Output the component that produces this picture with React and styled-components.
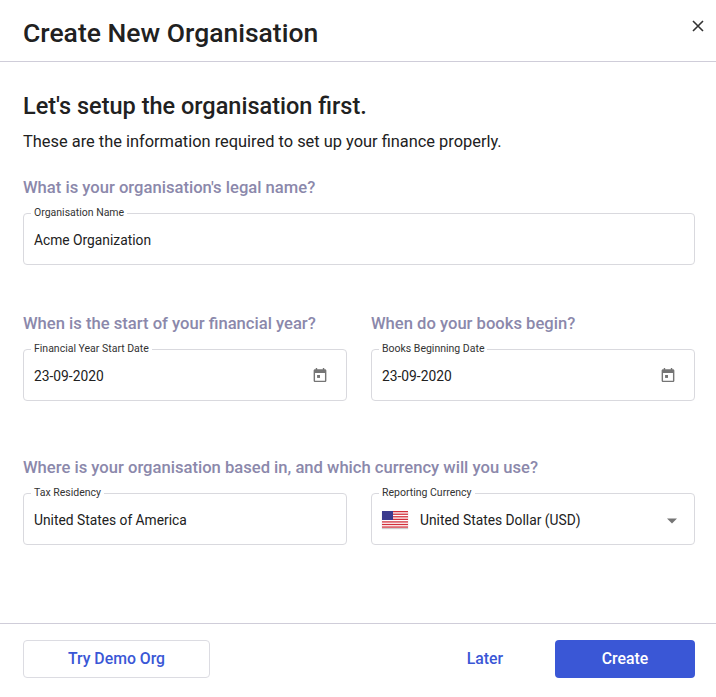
import React from "react";
import styled, { createGlobalStyle } from "styled-components";

const Global = createGlobalStyle`
  html, body { margin: 0; padding: 0; background: #fff; }
  body { font-family: Roboto, "Liberation Sans", sans-serif; color: #212121; }
`;

const Dialog = styled.div`
  width: 716px; height: 697px; display: flex; flex-direction: column; box-sizing: border-box;
`;
const Header = styled.div`
  height: 62px; box-sizing: border-box; border-bottom: 1px solid #cfcdd9;
  display: flex; align-items: center; justify-content: space-between; padding: 0 11px 0 23px;
`;
const Title = styled.h1`
  margin: 0; font-size: 26.5px; font-weight: 500; color: #212121; padding-top: 4px;
`;
const Close = styled.button`
  border: 0; background: none; padding: 0; margin-top: -10px; cursor: pointer; display: flex;
`;
const Body = styled.div`
  flex: 1; padding: 30px 21px 0 23px;
`;
const Heading = styled.h2`
  margin: 0; font-size: 23.5px; font-weight: 500; line-height: 28px;
`;
const Sub = styled.p`
  margin: 12px 0 0; font-size: 16.4px; line-height: 20px; color: #212121;
`;
const Question = styled.div`
  font-size: 16.6px; font-weight: 500; color: #8b88ab; line-height: 20px; margin-bottom: 14px;
`;
const Section = styled.div`
  margin-top: ${p => p.$mt}px;
`;
const Row = styled.div`
  display: grid; grid-template-columns: 1fr 1fr; column-gap: 24px;
`;
const Field = styled.fieldset`
  margin: 0; padding: 0 10px; height: 58px; box-sizing: border-box;
  border: 1px solid #d9d9de; border-radius: 4px; display: flex; align-items: center;
  gap: 10px; min-width: 0; position: relative; top: -5px;
`;
const Legend = styled.legend`
  font-size: 10.5px; color: #333; padding: 0 3px; margin-left: -3px; line-height: 12px;
`;
const Value = styled.span`
  flex: 1; font-size: 13.8px; color: #212121; margin-top: -4px;
`;
const IconWrap = styled.span`
  display: flex; margin-top: -6px; margin-right: 6px;
`;
const Flag = styled.svg`
  margin-top: -4px; margin-right: 2px; box-shadow: 0 1px 1px rgba(0,0,0,0.2);
`;
const Footer = styled.div`
  height: 74px; border-top: 1px solid #cfcdd9; display: flex; align-items: center;
  padding: 0 21px 4px 23px; box-sizing: border-box;
`;
const Btn = styled.button`
  height: 38px; box-sizing: border-box; font-family: inherit; font-size: 15.8px; font-weight: 500;
  border-radius: 4px; cursor: pointer; width: ${p => p.$w}px;
  color: ${p => p.$primary ? "#fff" : "#3a57d6"};
  background: ${p => p.$primary ? "#3a57d6" : "#fff"};
  border: ${p => p.$outline ? "1px solid #dcdce2" : "0"};
`;
const Spacer = styled.div` flex: 1; `;

const Cal = () => (
  <svg width="20" height="20" viewBox="0 0 24 24" fill="#757575">
    <path d="M19 4h-1V2h-2v2H8V2H6v2H5c-1.1 0-2 .9-2 2v14c0 1.1.9 2 2 2h14c1.1 0 2-.9 2-2V6c0-1.1-.9-2-2-2zm0 16H5V9h14v11z" transform="translate(12 12) scale(0.85) translate(-12 -12)"/>
    <rect x="8.5" y="12" width="3.5" height="3.5"/>
  </svg>
);

export default function App() {
  const stripes = Array.from({ length: 7 }, (_, i) => (
    <rect key={i} x="0" y={i * 2.57} width="26" height="1.29" fill="#d22f3a" />
  ));
  return (
    <>
      <Global />
      <Dialog>
        <Header>
          <Title>Create New Organisation</Title>
          <Close>
            <svg width="14" height="14" viewBox="0 0 14 14" stroke="#333" strokeWidth="1.6">
              <path d="M2 2l10 10M12 2L2 12" />
            </svg>
          </Close>
        </Header>
        <Body>
          <Heading>Let's setup the organisation first.</Heading>
          <Sub>These are the information required to set up your finance properly.</Sub>
          <Section $mt={26}>
            <Question>What is your organisation's legal name?</Question>
            <Field><Legend>Organisation Name</Legend><Value>Acme Organization</Value></Field>
          </Section>
          <Section $mt={44}>
            <Row>
              <div>
                <Question>When is the start of your financial year?</Question>
                <Field><Legend>Financial Year Start Date</Legend><Value>23-09-2020</Value><IconWrap><Cal /></IconWrap></Field>
              </div>
              <div>
                <Question>When do your books begin?</Question>
                <Field><Legend>Books Beginning Date</Legend><Value>23-09-2020</Value><IconWrap><Cal /></IconWrap></Field>
              </div>
            </Row>
          </Section>
          <Section $mt={52}>
            <Question>Where is your organisation based in, and which currency will you use?</Question>
            <Row>
              <Field><Legend>Tax Residency</Legend><Value>United States of America</Value></Field>
              <Field>
                <Legend>Reporting Currency</Legend>
                <Flag width="26" height="17" viewBox="0 0 26 17">
                  <rect width="26" height="17" fill="#fff" />
                  {stripes}
                  <rect width="11" height="9" fill="#3c3b8e" />
                </Flag>
                <Value>United States Dollar (USD)</Value>
                <IconWrap style={{ marginTop: -2 }}>
                  <svg width="12" height="8" viewBox="0 0 12 8"><path d="M1 1.5h10L6 6.5z" fill="#757575" /></svg>
                </IconWrap>
              </Field>
            </Row>
          </Section>
        </Body>
        <Footer>
          <Btn $outline $w={187}>Try Demo Org</Btn>
          <Spacer />
          <Btn $w={140}>Later</Btn>
          <Btn $primary $w={140}>Create</Btn>
        </Footer>
      </Dialog>
    </>
  );
}
